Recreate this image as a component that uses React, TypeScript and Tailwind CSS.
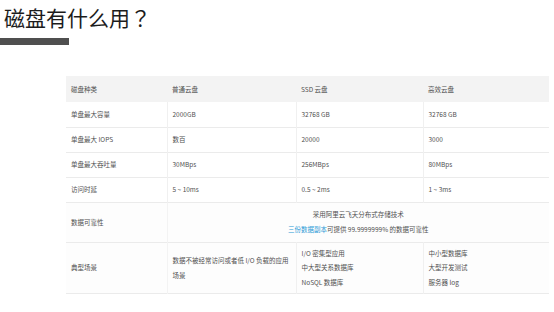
import React from "react";

const font = { fontFamily: '"Noto Sans CJK SC", "Noto Sans", sans-serif' };

type Row = { label: string; cells: string[]; h: string };

const rows: Row[] = [
  { label: "单盘最大容量", cells: ["2000GB", "32768 GB", "32768 GB"], h: "h-[25px]" },
  { label: "单盘最大 IOPS", cells: ["数百", "20000", "3000"], h: "h-[25px]" },
  { label: "单盘最大吞吐量", cells: ["30MBps", "256MBps", "80MBps"], h: "h-[25px]" },
  { label: "访问时延", cells: ["5 ~ 10ms", "0.5 ~ 2ms", "1 ~ 3ms"], h: "h-[25px]" },
];

export default function App() {
  return (
    <div className="relative h-[312px] w-[554px] overflow-hidden bg-white" style={font}>
      <div className="pl-[4px] pt-[3px] text-[21px] leading-[28px] text-[#1c1c1c]">
        磁盘有什么用
        <span style={{ fontFamily: '"Noto Sans CJK TC", sans-serif' }}>？</span>
      </div>
      <div className="mt-[7px] h-[7px] w-[69px] bg-[#4f4f4f]" />

      <table className="ml-[66px] mt-[31px] w-[483px] table-fixed border-collapse text-[6.5px] leading-[14.5px] text-[#505050]">
        <colgroup>
          <col className="w-[101px]" />
          <col className="w-[129px]" />
          <col className="w-[127px]" />
          <col className="w-[126px]" />
        </colgroup>
        <thead>
          <tr className="h-[26px] bg-[#f3f3f3]">
            <th className="pl-[5px] text-left font-normal">磁盘种类</th>
            <th className="pl-[5px] text-left font-normal">普通云盘</th>
            <th className="pl-[5px] text-left font-normal">SSD 云盘</th>
            <th className="pl-[5px] text-left font-normal">高效云盘</th>
          </tr>
        </thead>
        <tbody>
          {rows.map((r) => (
            <tr key={r.label} className={`${r.h} border-b border-[#ebebeb]`}>
              <td className="pl-[5px]">{r.label}</td>
              {r.cells.map((c, i) => (
                <td key={i} className="border-l border-[#f0f0f0] pl-[5px]">
                  {c}
                </td>
              ))}
            </tr>
          ))}
          <tr className="h-[40px] border-b border-[#ebebeb] bg-[#fdfdfd]">
            <td className="pl-[5px]">数据可靠性</td>
            <td colSpan={3} className="border-l border-[#f3f3f3] text-center leading-[15px]">
              <div>采用阿里云飞天分布式存储技术</div>
              <div>
                <span className="text-[#2b9ad6]">三份数据副本</span>可提供 99.9999999% 的数据可靠性
              </div>
            </td>
          </tr>
          <tr className="h-[51px] border-b border-[#ebebeb] bg-[#fdfdfd]">
            <td className="pl-[5px]">典型场景</td>
            <td className="border-l border-[#f3f3f3] pl-[5px] pr-[6px]">
              数据不被经常访问或者低 I/O 负载的应用场景
            </td>
            <td className="border-l border-[#f0f0f0] pl-[5px]">
              <div>I/O 密集型应用</div>
              <div>中大型关系数据库</div>
              <div>NoSQL 数据库</div>
            </td>
            <td className="border-l border-[#f0f0f0] pl-[5px]">
              <div>中小型数据库</div>
              <div>大型开发测试</div>
              <div>服务器 log</div>
            </td>
          </tr>
        </tbody>
      </table>
    </div>
  );
}
